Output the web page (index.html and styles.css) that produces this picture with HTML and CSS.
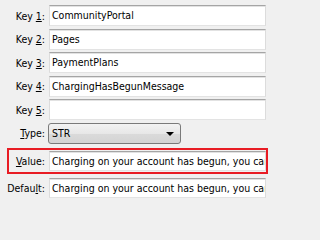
FILE: index.html
```html
<!DOCTYPE html>
<html>
<head>
<meta charset="utf-8">
<link rel="stylesheet" href="styles.css">
</head>
<body>
<div class="form">
  <div class="row"><label class="lbl">Key <u>1</u>:</label><div class="field">CommunityPortal</div></div>
  <div class="row"><label class="lbl">Key <u>2</u>:</label><div class="field">Pages</div></div>
  <div class="row"><label class="lbl">Key <u>3</u>:</label><div class="field">PaymentPlans</div></div>
  <div class="row"><label class="lbl">Key <u>4</u>:</label><div class="field">ChargingHasBegunMessage</div></div>
  <div class="row"><label class="lbl">Key <u>5</u>:</label><div class="field"></div></div>
  <div class="row row-select"><label class="lbl"><u>T</u>ype:</label><div class="select"><span>STR</span><span class="arrow"></span></div></div>
  <div class="row row-hl"><label class="lbl"><u>V</u>alue:</label><div class="field">Charging on your account has begun, you can</div></div>
  <div class="row row-last"><label class="lbl">Defau<u>l</u>t:</label><div class="field">Charging on your account has begun, you can</div></div>
</div>
</body>
</html>
```
FILE: styles.css
```css
html, body {
  margin: 0;
  padding: 0;
  background: #f0f0f0;
}
body {
  width: 270px;
  height: 201px;
  overflow: hidden;
  font-family: "DejaVu Sans Condensed", "DejaVu Sans", sans-serif;
  font-stretch: condensed;
  font-size: 10.5px;
  color: #000;
}
.form {
  display: flex;
  flex-direction: column;
  padding-top: 5px;
}
.row {
  display: flex;
  align-items: center;
  gap: 4px;
  margin-bottom: 2.5px;
}
.lbl {
  width: 45px;
  flex: none;
  text-align: right;
  white-space: nowrap;
}
.lbl u {
  text-decoration-thickness: 1px;
  text-underline-offset: 1px;
}
.field {
  box-sizing: border-box;
  width: 217px;
  height: 21px;
  line-height: 19px;
  padding-left: 2px;
  background: #fff;
  border: 1px solid;
  border-color: #a5a5a5 #dcdcdc #e3e3e3 #dcdcdc;
  box-shadow: inset 0 1px 0 #e2e2e2;
  white-space: nowrap;
  overflow: hidden;
}
.row-select {
  margin-top: 0;
  margin-bottom: 4px;
}
.select {
  box-sizing: border-box;
  width: 133px;
  height: 21px;
  margin-left: -1px;
  padding-left: 3px;
  line-height: 19px;
  border: 1px solid #7a7a7a;
  border-radius: 3px;
  background: linear-gradient(#f3f3f3, #e7e7e7 50%, #dadada 51%, #d4d4d4);
  display: flex;
  align-items: center;
  justify-content: space-between;
  padding-right: 4px;
}
.arrow {
  width: 0;
  height: 0;
  border-left: 4px solid transparent;
  border-right: 4px solid transparent;
  border-top: 4px solid #000;
  margin-right: 2px;
  margin-top: 1px;
}
.row-hl {
  margin-left: 7px;
  margin-right: 2px;
  border: 2px solid #e81c24;
  padding: 1px 0;
  margin-bottom: 4px;
}
.row-hl .lbl {
  width: 36px;
}
.row-hl .field {
  height: 20px;
  line-height: 18px;
}
.row-last .field {
  height: 20px;
  line-height: 18px;
}
```
